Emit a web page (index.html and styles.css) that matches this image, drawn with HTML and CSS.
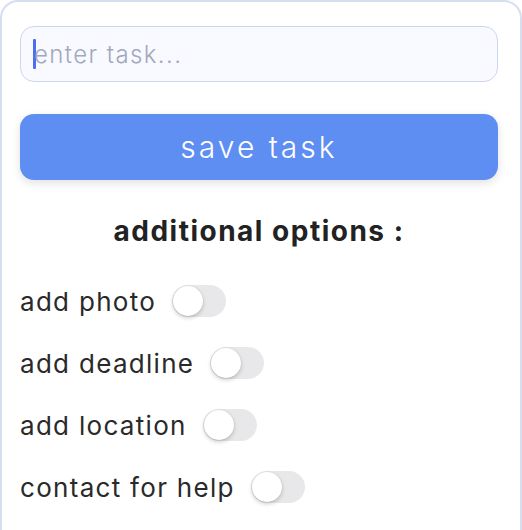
FILE: index.html
```html
<!DOCTYPE html>
<html>
<head>
<meta charset="utf-8">
<link rel="stylesheet" href="styles.css">
</head>
<body>
<div class="card">
  <div class="task-input"><span class="caret"></span><span class="placeholder">enter task...</span></div>
  <button class="save-btn">save task</button>
  <h2 class="options-title">additional options :</h2>
  <div class="options">
    <div class="option"><span class="label">add photo</span><span class="toggle"><span class="knob"></span></span></div>
    <div class="option"><span class="label">add deadline</span><span class="toggle"><span class="knob"></span></span></div>
    <div class="option"><span class="label">add location</span><span class="toggle"><span class="knob"></span></span></div>
    <div class="option"><span class="label">contact for help</span><span class="toggle"><span class="knob"></span></span></div>
  </div>
</div>
</body>
</html>
```
FILE: styles.css
```css
html, body { margin: 0; padding: 0; background: #fff; overflow: hidden; }
body { font-family: "Inter", "Open Sans", sans-serif; color: #222; }
.card {
  margin-top: 0;
  width: 478px;
  height: 600px;
  border: 2px solid #d6def0;
  border-radius: 18px;
  padding: 24px 22px 0 18px;
  box-sizing: content-box;
  display: flex;
  flex-direction: column;
}
.task-input {
  height: 54px;
  border: 1.5px solid #cdd6ed;
  border-radius: 14px;
  background: #f8faff;
  display: flex;
  align-items: center;
  padding-left: 12px;
  font-size: 24px;
  letter-spacing: 1.4px;
  color: #a2a8bd;
  font-weight: 300;
}
.caret { width: 3px; height: 30px; background: #4d6ef0; border-radius: 1px; margin-right: -2px; }
.save-btn {
  margin-top: 32px;
  height: 66px;
  border: none;
  border-radius: 14px;
  background: #5f8ef2;
  color: #fff;
  font-family: inherit;
  font-size: 30px;
  font-weight: 300;
  letter-spacing: 3px;
  box-shadow: 0 3px 10px rgba(0,0,0,0.12);
  padding: 0;
}
.options-title {
  margin: 35px 0 0;
  text-align: center;
  font-size: 28px;
  line-height: 32px;
  font-weight: 700;
  letter-spacing: 1.5px;
  color: #222;
}
.options { margin-top: 38px; display: flex; flex-direction: column; gap: 30px; }
.option { display: flex; align-items: center; height: 32px; }
.label { font-size: 26px; font-weight: 400; letter-spacing: 1.3px; color: #2a2a2a; }
.toggle {
  margin-left: 16px;
  width: 54px; height: 32px;
  border-radius: 16px;
  background: #e8e8ea;
  position: relative;
}
.knob {
  position: absolute; left: 1px; top: 1px;
  width: 30px; height: 30px;
  border-radius: 50%;
  background: #fff;
  box-shadow: 0 2px 4px rgba(0,0,0,0.2), 0 0 0 0.5px rgba(0,0,0,0.06);
}
```
